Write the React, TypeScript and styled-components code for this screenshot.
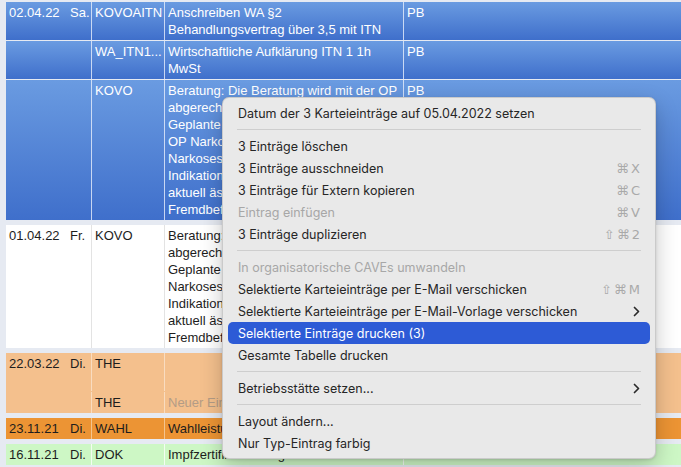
import React from 'react';
import styled, { createGlobalStyle } from 'styled-components';

type Tone = 'selected' | 'plain' | 'peach' | 'orange' | 'green';

const tones: Record<Tone, { bg: string; fg: string; line: string }> = {
  selected: { bg: 'linear-gradient(#6a9be1, #3f6fcb)', fg: '#ffffff', line: 'rgba(232, 239, 251, 0.8)' },
  plain: { bg: '#ffffff', fg: '#1d1d1d', line: '#e3e3e3' },
  peach: { bg: '#f4c08d', fg: '#1d1d1d', line: 'rgba(255, 255, 255, 0.45)' },
  orange: { bg: '#ec9434', fg: '#1d1d1d', line: 'rgba(255, 255, 255, 0.45)' },
  green: { bg: '#cdf7c5', fg: '#1d1d1d', line: 'rgba(255, 255, 255, 0.75)' },
};

interface Entry {
  date?: string,
  day?: string,
  code: string,
  lines: string[],
  muted?: boolean,
  who: string,
}

interface EntryGroup {
  tone: Tone,
  joined?: boolean,
  entries: Entry[],
}

const groups: EntryGroup[] = [
  {
    tone: 'selected',
    entries: [
      { date: '02.04.22', day: 'Sa.', code: 'KOVOAITN', lines: ['Anschreiben WA §2', 'Behandlungsvertrag über 3,5 mit ITN'], who: 'PB' },
      { code: 'WA_ITN1...', lines: ['Wirtschaftliche Aufklärung ITN 1 1h', 'MwSt'], who: 'PB' },
      {
        code: 'KOVO',
        lines: [
          'Beratung: Die Beratung wird mit der OP',
          'abgerechnet, keine separate Rechnung.',
          'Geplante Operation: Septorhinoplastik',
          'OP Narkose: ITN, ambulant geplant',
          'Narkosesprechstunde erfolgt',
          'Indikation: funktionell und',
          'aktuell ästhetisch gewünscht',
          'Fremdbefunde liegen vor',
        ],
        who: 'PB',
      },
    ],
  },
  {
    tone: 'plain',
    entries: [
      {
        date: '01.04.22',
        day: 'Fr.',
        code: 'KOVO',
        lines: [
          'Beratung: Die Beratung wird mit der OP',
          'abgerechnet, keine separate Rechnung.',
          'Geplante Operation: Septorhinoplastik',
          'Narkosesprechstunde erfolgt',
          'Indikation: funktionell und',
          'aktuell ästhetisch gewünscht',
          'Fremdbefunde liegen vor',
        ],
        who: 'PB',
      },
    ],
  },
  {
    tone: 'peach',
    joined: true,
    entries: [
      { date: '22.03.22', day: 'Di.', code: 'THE', lines: ['\u00a0', '\u00a0'], who: '' },
      { code: 'THE', lines: ['Neuer Eintrag'], muted: true, who: '' },
    ],
  },
  {
    tone: 'orange',
    entries: [{ date: '23.11.21', day: 'Di.', code: 'WAHL', lines: ['Wahlleistungsvereinbarung'], who: 'PB' }],
  },
  {
    tone: 'green',
    entries: [{ date: '16.11.21', day: 'Di.', code: 'DOK', lines: ['Impfzertifikat erzeugt'], who: 'PB' }],
  },
];

type MenuEntry = 'sep' | { label: string, keys?: string[], sub?: boolean, disabled?: boolean, active?: boolean };

const menu: MenuEntry[] = [
  { label: 'Datum der 3 Karteieinträge auf 05.04.2022 setzen' },
  'sep',
  { label: '3 Einträge löschen' },
  { label: '3 Einträge ausschneiden', keys: ['⌘', 'X'] },
  { label: '3 Einträge für Extern kopieren', keys: ['⌘', 'C'] },
  { label: 'Eintrag einfügen', keys: ['⌘', 'V'], disabled: true },
  { label: '3 Einträge duplizieren', keys: ['⇧', '⌘', '2'] },
  'sep',
  { label: 'In organisatorische CAVEs umwandeln', disabled: true },
  { label: 'Selektierte Karteieinträge per E-Mail verschicken', keys: ['⇧', '⌘', 'M'] },
  { label: 'Selektierte Karteieinträge per E-Mail-Vorlage verschicken', sub: true },
  { label: 'Selektierte Einträge drucken (3)', active: true },
  { label: 'Gesamte Tabelle drucken' },
  'sep',
  { label: 'Betriebsstätte setzen...', sub: true },
  'sep',
  { label: 'Layout ändern...' },
  { label: 'Nur Typ-Eintrag farbig' },
];

const GlobalStyle = createGlobalStyle`
  html, body {
    margin: 0;
    padding: 0;
  }
  body {
    width: 681px;
    height: 467px;
    overflow: hidden;
    background: #e6eaf2;
    font-family: "Liberation Sans", Arial, sans-serif;
  }
`;

const Screen = styled.div`
  position: relative;
  height: 467px;
  overflow: hidden;
  box-sizing: border-box;
  padding: 2px 0 0 6px;
`;

const Table = styled.div`
  display: flex;
  flex-direction: column;
  gap: 5px;
`;

const Group = styled.div<{ $fill?: string }>`
  display: flex;
  flex-direction: column;
  gap: 1px;
  background: ${p => p.$fill || 'transparent'};
`;

const Row = styled.div<{ $tone: Tone }>`
  display: grid;
  grid-template-columns: 86px 73px 239px 1fr;
  background: ${p => tones[p.$tone].bg};
  color: ${p => tones[p.$tone].fg};
  font-size: 13px;
  line-height: 17px;
`;

const Cell = styled.div<{ $tone: Tone }>`
  box-sizing: border-box;
  padding: 2px 3px;
  border-right: 1px solid ${p => tones[p.$tone].line};
  white-space: nowrap;
  overflow: hidden;

  &:last-child {
    border-right: none;
  }
`;

const DateText = styled.span`
  display: inline-block;
  width: 61px;
`;

const Line = styled.div<{ $muted?: boolean }>`
  overflow: hidden;
  color: ${p => (p.$muted ? '#b39c86' : 'inherit')};
`;

const Menu = styled.div`
  position: absolute;
  left: 222px;
  top: 97px;
  width: 434px;
  box-sizing: border-box;
  padding: 4px 5px;
  background: #e9e9e9;
  border: 1px solid rgba(0, 0, 0, 0.13);
  border-radius: 7px;
  box-shadow: 0 8px 22px rgba(0, 0, 0, 0.22), 0 1px 3px rgba(0, 0, 0, 0.12);
  font-family: Inter, "DejaVu Sans", sans-serif;
  font-size: 12.5px;
`;

const Item = styled.div<{ $disabled?: boolean, $active?: boolean }>`
  display: flex;
  align-items: center;
  justify-content: space-between;
  height: 22px;
  padding: 0 10px;
  border-radius: 5px;
  background: ${p => (p.$active ? '#2d5bd6' : 'transparent')};
  color: ${p => (p.$active ? '#ffffff' : p.$disabled ? '#a7a7a7' : '#262626')};
`;

const Keys = styled.span`
  display: flex;
  gap: 2px;
  color: #a9a9a9;
  font-family: "DejaVu Sans", Inter, sans-serif;
  font-size: 13px;
`;

const Separator = styled.div`
  height: 11px;
  display: flex;
  align-items: center;
  padding: 0 9px;

  &::after {
    content: '';
    flex: 1;
    height: 1px;
    background: #cecece;
  }
`;

const Chevron = () => (
  <svg width="7" height="11" viewBox="0 0 7 11">
    <path d="M1.5 1.5 L5.5 5.5 L1.5 9.5" fill="none" stroke="#2a2a2a" strokeWidth="1.7" strokeLinecap="round" strokeLinejoin="round" />
  </svg>
);

const App: React.FC = () => {
  return (
    <>
      <GlobalStyle />
      <Screen>
        <Table>
          {groups.map((group, gi) => (
            <Group key={gi} $fill={group.joined ? tones[group.tone].bg : undefined}>
              {group.entries.map((entry, ei) => (
                <Row key={ei} $tone={group.tone}>
                  <Cell $tone={group.tone}>
                    {entry.date && <DateText>{entry.date}</DateText>}
                    {entry.day}
                  </Cell>
                  <Cell $tone={group.tone}>{entry.code}</Cell>
                  <Cell $tone={group.tone}>
                    {entry.lines.map((line, li) => (
                      <Line key={li} $muted={entry.muted}>{line}</Line>
                    ))}
                  </Cell>
                  <Cell $tone={group.tone}>{entry.who}</Cell>
                </Row>
              ))}
            </Group>
          ))}
        </Table>

        <Menu>
          {menu.map((m, i) =>
            m === 'sep' ? (
              <Separator key={i} />
            ) : (
              <Item key={i} $disabled={m.disabled} $active={m.active}>
                <span>{m.label}</span>
                {m.keys && (
                  <Keys>
                    {m.keys.map((k, ki) => <span key={ki}>{k}</span>)}
                  </Keys>
                )}
                {m.sub && <Chevron />}
              </Item>
            )
          )}
        </Menu>
      </Screen>
    </>
  );
};

export default App;
